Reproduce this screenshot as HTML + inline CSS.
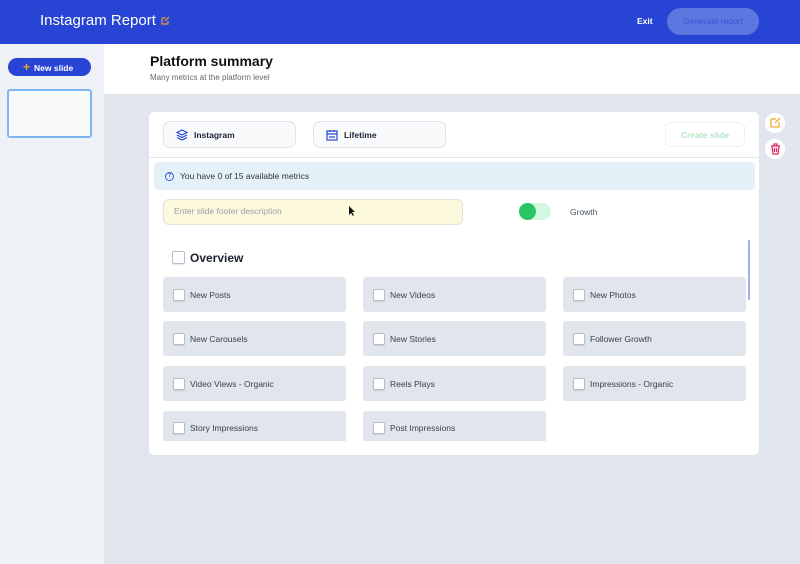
<!DOCTYPE html>
<html><head><style>
*{box-sizing:border-box;margin:0;padding:0}
body{width:800px;height:564px;overflow:hidden;font-family:"Liberation Sans",sans-serif;background:#e1e5ec;position:relative}
.abs{position:absolute}
.hdr{left:0;top:0;width:800px;height:44px;background:#2744d4}
.side{left:0;top:44px;width:104px;height:520px;background:#eef1f6}
.sub{left:104px;top:44px;width:696px;height:51px;background:#fff;border-bottom:1px solid #dfe3ea}
.card{left:149px;top:112px;width:610px;height:343px;background:#fff;border-radius:5px;overflow:hidden}
.sel{height:27px;border:1.5px solid #dfe3ea;border-radius:7px;background:#f9fafc;font-size:8.5px;font-weight:bold;color:#1d2233;display:flex;align-items:center;padding-left:12px;gap:6px}
.item{width:183px;height:35px;background:#e1e5ec;border-radius:3px;font-size:8.5px;color:#39414f;display:flex;align-items:center;padding-left:10px}
.cb{width:12px;height:12px;border:1px solid #b7bec9;background:#fff;border-radius:2px;margin-right:5px;box-shadow:0 1px 1px rgba(0,0,0,.1)}
</style></head><body>
<div class="abs hdr"></div>
<div class="abs" style="left:40px;top:12px;color:#fff;font-size:15px">Instagram Report</div>
<svg class="abs" style="left:161px;top:16px" width="9" height="9" viewBox="0 0 9 9"><path d="M1 2h4M1 2v6h6V5M4 5l4-4" stroke="#e59a3b" stroke-width="1.2" fill="none"/></svg>
<div class="abs" style="left:637px;top:16px;color:#fff;font-size:8.5px;font-weight:bold">Exit</div>
<div class="abs" style="left:667px;top:8px;width:92px;height:27px;border-radius:14px;background:#5c78e0;color:#3a55d2;font-size:8.5px;text-align:center;line-height:27px">Generate report</div>
<div class="abs side"></div>
<div class="abs" style="left:8px;top:58px;width:83px;height:18px;border-radius:9px;background:#2744d4;color:#fff;font-size:8.5px;font-weight:bold;line-height:18px;padding-left:15px"><span style="color:#f5a623;font-size:12px;margin-right:4px">+</span>New slide</div>
<div class="abs" style="left:7px;top:89px;width:85px;height:49px;border:2px solid #80b6f0;border-radius:3px;background:#f7f9fb"></div>
<div class="abs sub"></div>
<div class="abs" style="left:150px;top:53px;font-size:14px;font-weight:bold;color:#111">Platform summary</div>
<div class="abs" style="left:150px;top:73px;font-size:8px;color:#666">Many metrics at the platform level</div>
<div class="abs card">
 <div class="abs sel" style="left:14px;top:9px;width:133px"><svg width="12" height="12" viewBox="0 0 12 12"><path d="M6 1L11 3.5 6 6 1 3.5zM1 6l5 2.5L11 6M1 8.5L6 11l5-2.5" stroke="#2744d4" stroke-width="1.2" fill="none"/></svg>Instagram</div>
 <div class="abs sel" style="left:164px;top:9px;width:133px"><svg width="12" height="12" viewBox="0 0 12 12"><rect x="1" y="2" width="10" height="9" stroke="#2744d4" stroke-width="1.2" fill="none"/><path d="M1 5h10M4 1v2M8 1v2M3 8h6" stroke="#2744d4" stroke-width="1.2"/></svg>Lifetime</div>
 <div class="abs" style="left:516px;top:10px;width:80px;height:25px;border:1px solid #eef0f3;border-radius:6px;color:#b6e4c6;font-size:8.5px;font-weight:bold;text-align:center;line-height:24px">Create slide</div>
 <div class="abs" style="left:0;top:45px;width:610px;height:1px;background:#e6e9ee"></div>
 <div class="abs" style="left:5px;top:50px;width:601px;height:28px;background:#e5f1f8;border-radius:4px;font-size:8.5px;color:#333;line-height:28px;padding-left:26px">You have 0 of 15 available metrics</div>
 <div class="abs" style="left:16px;top:60px;width:9px;height:9px;border:1.2px solid #3557d8;border-radius:50%;font-size:6px;line-height:7px;text-align:center;color:#3557d8;font-weight:bold">?</div>
 <div class="abs" style="left:14px;top:87px;width:300px;height:26px;background:#fdf9dc;border:1.5px solid #e3e2d3;border-radius:6px;font-size:8.5px;color:#9aa0aa;line-height:23px;padding-left:10px">Enter slide footer description</div>
 <div class="abs" style="left:370px;top:91px;width:32px;height:17px;border-radius:9px;background:#d4f7e0"></div>
 <div class="abs" style="left:370px;top:91px;width:17px;height:17px;border-radius:50%;background:#28c565"></div>
 <div class="abs" style="left:421px;top:95px;font-size:8.5px;color:#4a5568">Growth</div>
 <div class="abs" style="left:23px;top:139px;width:13px;height:13px;border:1px solid #b7bec9;border-radius:2px;box-shadow:0 1px 1px rgba(0,0,0,.1)"></div>
 <div class="abs" style="left:41px;top:139px;font-size:12px;font-weight:bold;color:#1d2233">Overview</div>
 <div class="abs" style="left:599px;top:128px;width:2px;height:60px;background:#9fb0ea;border-radius:1px"></div>
 <div class="abs item" style="left:14px;top:165px"><span class="cb"></span>New Posts</div>
 <div class="abs item" style="left:214px;top:165px"><span class="cb"></span>New Videos</div>
 <div class="abs item" style="left:414px;top:165px"><span class="cb"></span>New Photos</div>
 <div class="abs item" style="left:14px;top:209px"><span class="cb"></span>New Carousels</div>
 <div class="abs item" style="left:214px;top:209px"><span class="cb"></span>New Stories</div>
 <div class="abs item" style="left:414px;top:209px"><span class="cb"></span>Follower Growth</div>
 <div class="abs item" style="left:14px;top:254px"><span class="cb"></span>Video Views - Organic</div>
 <div class="abs item" style="left:214px;top:254px"><span class="cb"></span>Reels Plays</div>
 <div class="abs item" style="left:414px;top:254px"><span class="cb"></span>Impressions - Organic</div>
 <div class="abs item" style="left:14px;top:299px;height:30px;border-radius:3px 3px 0 0;padding-top:4px"><span class="cb"></span>Story Impressions</div>
 <div class="abs item" style="left:214px;top:299px;height:30px;border-radius:3px 3px 0 0;padding-top:4px"><span class="cb"></span>Post Impressions</div>
</div>
<div class="abs" style="left:765px;top:113px;width:20px;height:20px;border-radius:50%;background:#fff"></div>
<svg class="abs" style="left:770px;top:117px" width="11" height="11" viewBox="0 0 11 11"><path d="M1 2h5M1 2v8h8V5M5 6l5-5" stroke="#f0a92a" stroke-width="1.3" fill="none"/></svg>
<div class="abs" style="left:765px;top:139px;width:20px;height:20px;border-radius:50%;background:#fff"></div>
<svg class="abs" style="left:770px;top:143px" width="11" height="12" viewBox="0 0 11 12"><path d="M1 3h9M4 3V1h3v2M2 3l1 8h5l1-8M4.5 5v4M6.5 5v4" stroke="#e0245e" stroke-width="1.2" fill="none"/></svg>
<svg class="abs" style="left:349px;top:206px" width="7" height="10" viewBox="0 0 7 10"><path d="M0 0v9l2-2 2 3 1-1-2-3h3z" fill="#111"/></svg>
</body></html>
